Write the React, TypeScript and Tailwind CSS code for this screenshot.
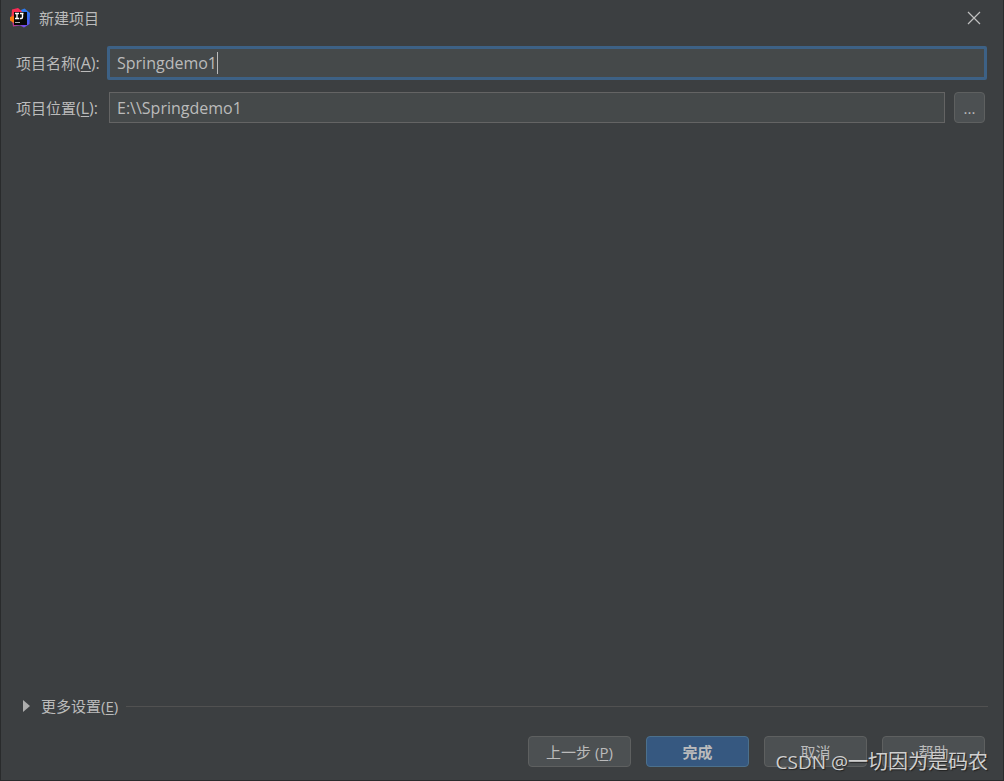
import { useState } from "react";

const buttonBase =
  "h-[31px] w-[103px] rounded-[4px] border text-[15px] leading-5 flex items-center justify-center";
const grayButton = "border-[#5e6060] bg-[#4c5052] text-[#bbbbbb]";

function IdeaLogo() {
  return (
    <svg width="20" height="20" viewBox="0 0 20 20" aria-hidden="true">
      <defs>
        <linearGradient id="warm" x1="0" y1="1" x2="0.5" y2="0">
          <stop offset="0" stopColor="#f97a12" />
          <stop offset="0.5" stopColor="#f5364f" />
          <stop offset="1" stopColor="#fe2857" />
        </linearGradient>
        <linearGradient id="cool" x1="0" y1="0" x2="0" y2="1">
          <stop offset="0" stopColor="#2a7df0" />
          <stop offset="0.6" stopColor="#3b62f0" />
          <stop offset="1" stopColor="#7a4cf2" />
        </linearGradient>
        <linearGradient id="bottom" x1="0" y1="0" x2="1" y2="0">
          <stop offset="0" stopColor="#c8307a" />
          <stop offset="1" stopColor="#6a50f5" />
        </linearGradient>
      </defs>
      <path d="M11 2L14.5 0.5L20 5L19.5 16L14 19.5L9 12Z" fill="url(#cool)" />
      <path d="M2 12L6 14L15 16L14 19.5L10 17.5L3 18.5Z" fill="url(#bottom)" />
      <path d="M2 1.5L8 0L12 3.5L6 13L3 14L0 11.5L1.5 8Z" fill="url(#warm)" />
      <path d="M0 9L4 8V15L0 12.5Z" fill="#f97a12" />
      <rect x="4" y="4" width="13" height="13" fill="#080808" />
      <path
        d="M5 5.5H9M7 5.5V10.5M5 10.5H9M10 5.5H13.5M12.5 5.5V9Q12.5 10.5 11.2 10.5H9.8"
        fill="none"
        stroke="#ffffff"
        strokeWidth="1.4"
      />
      <path d="M5 14.5H10" stroke="#b0b0b0" />
    </svg>
  );
}

export default function App() {
  const [name, setName] = useState("Springdemo1");
  const [location, setLocation] = useState("E:\\\\Springdemo1");

  return (
    <div className="relative flex min-h-screen flex-col border-x border-b border-[#292b2c] bg-[#3c3f41] font-['Open_Sans','Noto_Sans_CJK_SC',sans-serif] text-[15px] leading-5 text-[#bbbbbb]">
      {/* title bar */}
      <header className="flex h-9 items-center justify-between pl-[9px] pr-[22px]">
        <div className="flex items-center gap-[9px]">
          <IdeaLogo />
          <h1>新建项目</h1>
        </div>
        <button type="button" aria-label="关闭">
          <svg width="14" height="14" viewBox="0 0 14 14">
            <path d="M1 1L13 13M13 1L1 13" stroke="#c0c0c0" strokeWidth="1.2" />
          </svg>
        </button>
      </header>

      {/* form fields */}
      <main className="flex flex-1 flex-col gap-3 pt-[10px] pl-[15px] pr-4">
        <div className="flex items-center">
          <label htmlFor="name" className="w-[91px] shrink-0">
            项目名称<span className="text-base leading-5">(<u className="underline-offset-2">A</u>):</span>
          </label>
          <div className="relative flex-1">
            <input
              id="name"
              value={name}
              onChange={(e) => setName(e.target.value)}
              className="block h-[34px] w-full rounded-[2px] border-3 border-[#3d6185] bg-[#45494a] px-[7px] text-base caret-transparent outline-none"
            />
            <span className="absolute top-[6px] left-[110px] h-[22px] w-px bg-[#bbbbbb]" />
          </div>
        </div>
        <div className="flex items-center">
          <label htmlFor="location" className="w-[93px] shrink-0">
            项目位置<span className="text-base leading-5">(<u className="underline-offset-2">L</u>):</span>
          </label>
          <input
            id="location"
            value={location}
            onChange={(e) => setLocation(e.target.value)}
            className="block h-[31px] min-w-0 flex-1 border border-[#646464] bg-[#45494a] px-[7px] text-base outline-none"
          />
          <button
            type="button"
            className={`ml-[9px] mr-[2px] h-[31px] w-[31px] rounded-[4px] border ${grayButton}`}
          >
            ...
          </button>
        </div>
      </main>

      <div className="flex items-center pl-[22px] pr-[15px]">
        <button type="button" className="flex items-center gap-[11px]">
          <svg width="7" height="12" viewBox="0 0 7 12">
            <path d="M0 0L7 6L0 12Z" fill="#adadad" />
          </svg>
          <span>
            更多设置(<u className="underline-offset-2">E</u>)
          </span>
        </button>
        <div className="ml-2 h-px flex-1 bg-[#515151]" />
      </div>

      {/* dialog actions */}
      <footer className="flex justify-end gap-[15px] pt-5 pr-[18px] pb-[13px]">
        <button type="button" className={`${buttonBase} ${grayButton}`}>
          <span>
            上一步 (<u className="underline-offset-2">P</u>)
          </span>
        </button>
        <button
          type="button"
          className={`${buttonBase} border-[#4c708c] bg-[#365880] font-bold text-[#bbbbbb]`}
        >
          完成
        </button>
        <button type="button" className={`${buttonBase} ${grayButton}`}>
          取消
        </button>
        <button type="button" className={`${buttonBase} ${grayButton}`}>
          帮助
        </button>
      </footer>

      <p className="pointer-events-none absolute right-[15px] bottom-1 text-xl leading-7 text-[#d0d0d0] [text-shadow:1px_1px_1px_#222222]">
        <span className="text-[19px] leading-7">CSDN @</span>一切因为是码农
      </p>
    </div>
  );
}
